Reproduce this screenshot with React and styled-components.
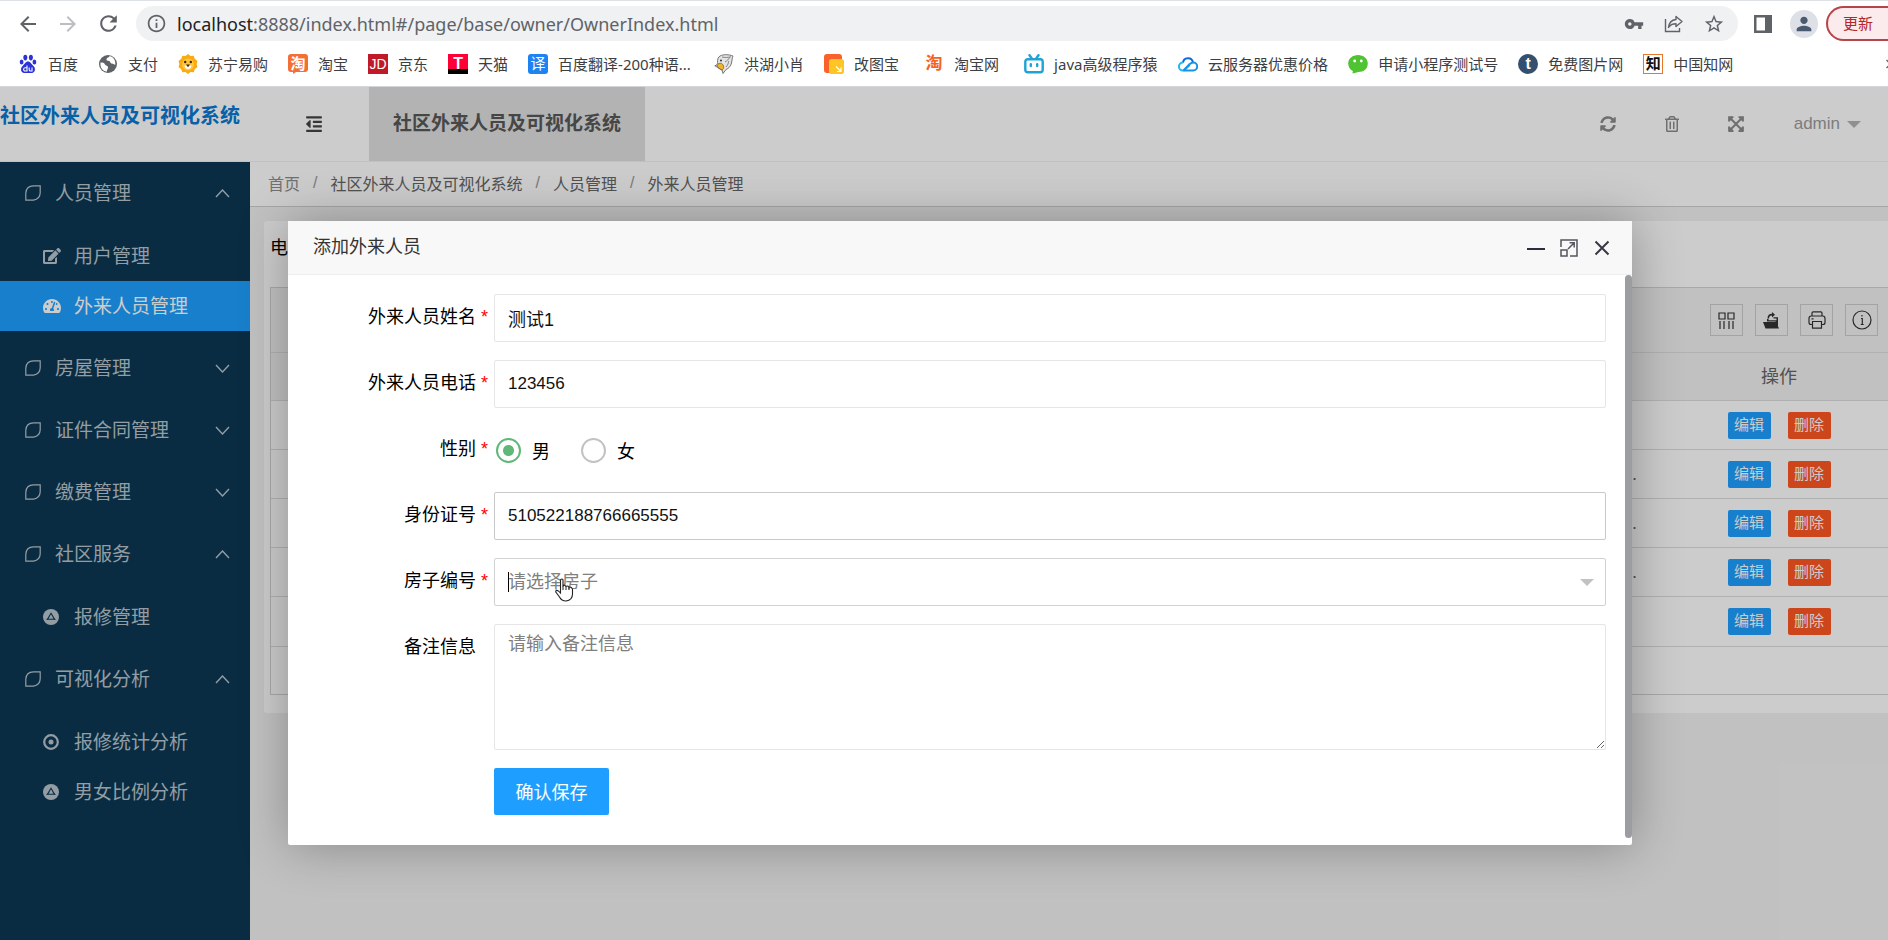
import React, { useState } from "react";
import styled, { createGlobalStyle } from "styled-components";
import { FaOutdent, FaSyncAlt, FaRegTrashAlt, FaExpandArrowsAlt, FaEdit, FaTachometerAlt } from "react-icons/fa";
import { MdArrowBack, MdArrowForward, MdRefresh, MdInfoOutline, MdVpnKey, MdStarBorder, MdPerson } from "react-icons/md";

const GlobalStyle = createGlobalStyle`
  *, *::before, *::after { box-sizing: border-box; }
  body {
    margin: 0;
    overflow: hidden;
    font-family: "Liberation Sans", "Noto Sans CJK SC", sans-serif;
    color: #333;
  }
  button, input, select, textarea { font-family: inherit; }
  svg { display: block; flex: none; }
`;

const Page = styled.div`
  display: flex;
  flex-direction: column;
  height: 100vh;
  overflow: hidden;
`;

/* ---------- browser chrome ---------- */
const Chrome = styled.div`
  border-top: 1px solid #dee1e6;
  border-bottom: 1px solid #d4d5d8;
  background: #fff;
  color: #5f6368;
`;
const AddressRow = styled.div`
  display: flex;
  align-items: center;
  height: 45px;
  padding-left: 16px;
`;
const ChromeButton = styled.button`
  display: flex;
  align-items: center;
  justify-content: center;
  width: 40px;
  height: 32px;
  padding: 0;
  border: 0;
  background: none;
  color: ${(p) => (p.$dim ? "#bcbec2" : "#5f6368")};
`;
const NavButtons = styled.div`
  display: flex;
  margin-left: -8px;
  margin-right: 8px;
`;
const Omnibox = styled.div`
  display: flex;
  flex: 1;
  align-items: center;
  height: 35px;
  margin-right: 5px;
  padding: 0 4px 0 10px;
  border-radius: 18px;
  background: #f0f1f3;
`;
const UrlText = styled.div`
  flex: 1;
  margin-left: 10px;
  font: 18px/32px "Noto Sans", sans-serif;
  white-space: nowrap;
  b { font-weight: 400; color: #202124; }
`;
const Avatar = styled.span`
  display: flex;
  align-items: center;
  justify-content: center;
  width: 28px;
  height: 28px;
  margin: 0 8px 0 7px;
  border-radius: 50%;
  background: #dde0e7;
  color: #4a5a70;
`;
const UpdateButton = styled.button`
  width: 62px;
  height: 35px;
  padding: 0 0 2px 15px;
  border: 2px solid #b5454a;
  border-right: 0;
  border-radius: 18px 0 0 18px;
  background: #fbebec;
  color: #b3262b;
  font-size: 15px;
  text-align: left;
`;
const Bookmarks = styled.nav`
  display: flex;
  align-items: center;
  gap: 20px;
  height: 40px;
  padding: 0 0 4px 18px;
  overflow: hidden;
`;
const Bookmark = styled.a`
  display: flex;
  flex: none;
  align-items: center;
  gap: 10px;
  color: #3c4043;
  font: 15px/20px "Noto Sans", "Noto Sans CJK SC", sans-serif;
  text-decoration: none;
  white-space: nowrap;
`;
const BookmarkLabel = styled.span`
  min-width: ${(p) => p.$min || 30}px;
`;
const More = styled.button`
  margin: 0 -8px 0 auto;
  padding: 0;
  border: 0;
  background: none;
  color: #5f6368;
`;
const Tile = styled.span`
  display: flex;
  align-items: center;
  justify-content: center;
  width: 20px;
  height: 20px;
  border: ${(p) => p.$border || "0"};
  border-radius: ${(p) => p.$round || 0}px;
  background: ${(p) => p.$bg || "none"};
  color: ${(p) => p.$color || "#fff"};
  font: ${(p) => p.$weight || 400} ${(p) => p.$size || 15}px/20px "Liberation Sans", "Noto Sans CJK SC", sans-serif;
`;

/* ---------- admin application ---------- */
const Admin = styled.div`
  position: relative;
  display: flex;
  flex: 1;
  flex-direction: column;
  min-height: 0;
  background: #f2f2f2;
`;
const Header = styled.header`
  display: flex;
  flex: none;
  height: 75px;
  border-bottom: 1px solid #f2f2f2;
  background: #fff;
`;
const Logo = styled.a`
  width: 250px;
  color: #0a78d2;
  font-size: 20px;
  font-weight: 700;
  line-height: 58px;
  text-decoration: none;
  white-space: nowrap;
`;
const IconButton = styled.button`
  display: flex;
  align-items: center;
  justify-content: center;
  width: 64px;
  padding: 0;
  border: 0;
  background: none;
  color: #8b8b8b;
`;
const ToggleButton = styled(IconButton)`
  width: 119px;
  padding-left: 8px;
  color: #444;
`;
const HeaderTab = styled.button`
  padding: 0 24px;
  margin-right: auto;
  border: 0;
  background: #e0e0e0;
  color: #585858;
  font-size: 19px;
  font-weight: 700;
  line-height: 74px;
`;
const User = styled.button`
  display: flex;
  align-items: center;
  gap: 7px;
  margin-left: 26px;
  padding: 0 27px 0 0;
  border: 0;
  background: none;
  color: #9c9c9c;
  font-size: 17px;
  &::after {
    content: "";
    border: 7px solid transparent;
    border-top-color: #b4b4b4;
    border-bottom: 0;
  }
`;
const Body = styled.div`
  display: flex;
  flex: 1;
  min-height: 0;
`;
const Sidebar = styled.nav`
  flex: none;
  width: 250px;
  background: #0c3854;
`;
const MenuTitle = styled.button`
  display: flex;
  align-items: center;
  gap: 14px;
  width: 100%;
  height: 62px;
  padding: 0 20px 0 25px;
  border: 0;
  background: none;
  color: #b9c5cd;
  font-size: 19px;
  text-align: left;
`;
const MenuText = styled.span`
  flex: 1;
  padding-bottom: 3px;
`;
const SubMenu = styled.div`
  padding: 7px 0 6px;
`;
const MenuLink = styled.a`
  display: flex;
  align-items: center;
  gap: 12px;
  height: 50px;
  padding-left: 43px;
  background: ${(p) => (p.$active ? "#1e9fff" : "none")};
  color: ${(p) => (p.$active ? "#fff" : "#b9c5cd")};
  font-size: 19px;
  text-decoration: none;
`;
const IconSlot = styled.span`
  display: flex;
  width: 19px;
`;
const Main = styled.main`
  flex: 1;
  min-width: 0;
`;
const Breadcrumb = styled.nav`
  display: flex;
  align-items: center;
  gap: 13px;
  height: 45px;
  padding: 0 0 2px 18px;
  border-bottom: 1px solid #d0d0d0;
  background: #fff;
  color: #999;
  font-size: 16px;
`;
const Crumb = styled.a`
  color: ${(p) => (p.$home ? "#8c8c8c" : "#666")};
  text-decoration: none;
`;
const Card = styled.section`
  margin: 14px 0 0 14px;
  padding: 0 0 18px 6px;
  border-radius: 3px 0 0 3px;
  background: #fff;
`;
const SearchRow = styled.div`
  height: 66px;
  color: #000;
  font-size: 18px;
  line-height: 54px;
`;
const Grid = styled.div`
  border: 1px solid #d4d4d4;
  border-right: 0;
`;
const GridTools = styled.div`
  display: flex;
  align-items: center;
  justify-content: flex-end;
  gap: 12px;
  height: 64px;
  padding-right: 10px;
  background: #f2f2f2;
`;
const ToolButton = styled.button`
  display: flex;
  align-items: center;
  justify-content: center;
  width: 33px;
  height: 32px;
  padding: 0;
  border: 1px solid #ccc;
  background: none;
  color: #333;
`;
const Table = styled.table`
  width: 100%;
  border-collapse: collapse;
  color: #666;
  font-size: 18px;
  th, td {
    height: 49px;
    padding: 0;
    border-top: 1px solid #dedede;
    font-weight: 400;
  }
  th {
    height: 48px;
    padding-bottom: 4px;
    background: #f2f2f2;
  }
  td:first-child { padding-right: 33px; text-align: right; }
  th:last-child, td:last-child { width: 218px; }
`;
const RowActions = styled.div`
  display: flex;
  align-items: center;
  justify-content: center;
  gap: 17px;
`;
const RowButton = styled.button`
  width: 43px;
  height: 27px;
  padding: 0;
  border: 0;
  border-radius: 2px;
  background: ${(p) => (p.$danger ? "#ff5722" : "#1e9fff")};
  color: #fff;
  font-size: 15px;
  line-height: 26px;
`;
const GridFoot = styled.div`
  height: 48px;
  border-top: 1px solid #dedede;
`;

/* ---------- dialog ---------- */
const Shade = styled.div`
  position: absolute;
  inset: 0;
  padding: 134px 256px 95px 288px;
  background: rgba(0, 0, 0, 0.2);
`;
const Dialog = styled.section`
  display: flex;
  flex-direction: column;
  border-radius: 2px;
  background: #fff;
  box-shadow: 1px 1px 50px rgba(0, 0, 0, 0.3);
`;
const DialogHead = styled.div`
  display: flex;
  align-items: center;
  height: 54px;
  padding: 0 20px 0 25px;
  border-bottom: 1px solid #eee;
  background: #f8f8f8;
`;
const DialogTitle = styled.h2`
  flex: 1;
  margin: 0;
  padding-bottom: 2px;
  color: #333;
  font-size: 18px;
  font-weight: 400;
  line-height: 50px;
`;
const DialogButton = styled.button`
  display: flex;
  align-items: center;
  justify-content: center;
  width: 20px;
  height: 20px;
  margin-left: 13px;
  padding: 0;
  border: 0;
  background: none;
  color: #2e2d3c;
`;
const DialogBody = styled.div`
  display: flex;
`;
const ScrollThumb = styled.div`
  width: 7px;
  margin-bottom: 7px;
  border-radius: 4px;
  background: #9c9da0;
`;
const Form = styled.form`
  display: flex;
  flex: 1;
  flex-direction: column;
  gap: 18px;
  padding: 19px 19px 30px 0;
`;
const Field = styled.div`
  display: flex;
  align-items: flex-start;
`;
const Label = styled.label`
  display: flex;
  flex: none;
  justify-content: flex-end;
  width: 206px;
  color: #000;
  font-size: 18px;
  line-height: 46px;
`;
const Star = styled.span`
  width: 18px;
  padding-left: 5px;
  color: #f00;
`;
const control = `
  flex: 1;
  min-width: 0;
  border-radius: 2px;
  outline: 0;
  background: #fff;
  color: #111;
  font-size: 18px;
  &::placeholder { color: #808080; opacity: 1; }
`;
const TextInput = styled.input`
  ${control}
  height: 48px;
  padding: 0 13px;
  border: 1px solid ${(p) => (p.$strong ? "#c9c9c9" : "#e6e6e6")};
  &[inputmode="numeric"] { font-size: 17px; }
`;
const TextArea = styled.textarea`
  ${control}
  display: block;
  height: 126px;
  padding: 6px 13px;
  border: 1px solid #e6e6e6;
  line-height: 26px;
  resize: vertical;
`;
const SelectBox = styled.div`
  position: relative;
  display: flex;
  flex: 1;
`;
const Select = styled.select`
  ${control}
  height: 48px;
  padding: 0 13px;
  border: 1px solid #d2d2d2;
  color: #808080;
  appearance: none;
`;
const SelectArrow = styled.span`
  position: absolute;
  top: 21px;
  right: 12px;
  border: 7px solid transparent;
  border-top-color: #c2c2c2;
  border-bottom: 0;
  pointer-events: none;
`;
const Caret = styled.span`
  position: absolute;
  top: 14px;
  left: 14px;
  width: 1px;
  height: 20px;
  background: #000;
`;
const Pointer = styled.svg`
  position: absolute;
  top: 20px;
  left: 61px;
`;
const RadioGroup = styled.div`
  display: flex;
  align-items: center;
  gap: 31px;
  height: 48px;
  padding-left: 2px;
`;
const RadioLabel = styled.label`
  display: flex;
  align-items: center;
  gap: 11px;
  color: #000;
  font-size: 18px;
`;
const Radio = styled.input`
  width: 25px;
  height: 25px;
  margin: 0;
  border: 2px solid #c2c2c2;
  border-radius: 50%;
  appearance: none;
  &:checked {
    border-color: #5fb878;
    background: radial-gradient(circle, #5fb878 5px, transparent 6px);
  }
`;
const SaveButton = styled.button`
  width: 115px;
  height: 47px;
  margin-left: 206px;
  padding: 0 0 2px;
  border: 0;
  border-radius: 2px;
  background: #1e9fff;
  color: #fff;
  font-size: 18px;
`;

/* ---------- icons ---------- */
const Paw = () => (
  <svg width="20" height="20" viewBox="0 0 20 20" fill="#2b32d8">
    <ellipse cx="7.3" cy="3.6" rx="2" ry="2.8" /><ellipse cx="12.9" cy="3.6" rx="2" ry="2.8" />
    <ellipse cx="3.6" cy="8" rx="1.9" ry="2.5" /><ellipse cx="16.4" cy="8" rx="1.9" ry="2.5" />
    <path d="M10 7.5c-2.6 0-3.2 2.6-5.2 4.2-2.8 2.3-2.2 7 1.4 7.2h7.6c3.6-.2 4.2-4.9 1.4-7.2-2-1.6-2.6-4.2-5.2-4.2z" />
    <path d="M9 11.500v5.500H7.200a1.600 1.600 0 0 1 0-3.200H9M11.200 13.500v2.200q0 1.300 1.300 1.300h1.500v-3.500" fill="none" stroke="#fff" strokeWidth="1.100" />
  </svg>
);
const Globe = () => (
  <svg width="20" height="20" viewBox="0 0 20 20">
    <circle cx="10" cy="10" r="9" fill="#5f6368" />
    <path d="M2.500 8.500c2 .2 3.500 0 4.500 2 .8 1.600 3 .8 3 3 0 1.500-1 2-1.300 4.300C4.500 17 2 13.500 2.500 8.500zM11.500 2c-.2 1.800-2.500 1.200-3 3.200-.4 1.500 1 1.500 2.500 1.700 1.800.300 1 2.600 3 2.700 1.200 0 1.700 1 3.300 1.100C17.700 6 15.500 3 11.500 2z" fill="#fff" />
  </svg>
);
const Lion = () => (
  <svg width="20" height="20" viewBox="0 0 20 20">
    <path d="M10 0l2.500 2 3.200-.3 1 3L19.500 7 18.600 10l.9 3-2.800 2.200-1 3-3.200-.2L10 20l-2.500-2-3.200.2-1-3L.500 13l.9-3-.9-3 2.800-2.300 1-3 3.200.3z" fill="#f9ab10" />
    <circle cx="10" cy="10.500" r="6" fill="#ffc63c" />
    <circle cx="7.200" cy="8" r="1.200" fill="#3a2410" /><circle cx="12.800" cy="8" r="1.200" fill="#3a2410" />
    <path d="M6.500 11.500h7q-.6 3.500-3.500 3.500t-3.500-3.500z" fill="#fff" />
    <path d="M8 10.500h4L10 13.200z" fill="#3a2410" />
  </svg>
);
const Bird = () => (
  <svg width="20" height="20" viewBox="0 0 20 20">
    <path d="M6 2c4-2 9-1.500 13 0-1 2-.8 4-1.500 7-.8 3.500-3 5.500-5.500 6.500L9 19.500 8 16C5 15 2 12 .8 11.800c2-.6 2.600-1.300 2.700-3.300C3.500 5.500 4 3 6 2z" fill="#e4e4e4" stroke="#666" strokeWidth=".9" />
    <path d="M4.500 9.500c2-.8 4.500 0 5 2.500s0 3-1.500 4c-2-1-4-2.500-5-4z" fill="#efb32c" stroke="#5a4a20" strokeWidth=".6" />
    <path d="M8 3c3 .8 6 .5 9-.2M11 8c2-1 3.500-2.500 4.500-4.500M12 13c1.500-1.500 2.500-4 2.800-6" stroke="#777" fill="none" strokeWidth=".9" />
    <circle cx="7" cy="6.500" r="1" fill="#333" />
  </svg>
);
const Photos = () => (
  <svg width="20" height="20" viewBox="0 0 20 20">
    <rect width="18" height="19" rx="3" fill="#f9622b" />
    <rect x="5" y="5" width="15" height="15" rx="2.500" fill="#ffc525" />
    <path d="M12 12.500l5 5m0-4v4h-4" stroke="#fff" fill="none" strokeWidth="1.100" />
  </svg>
);
const TaobaoBubble = () => (
  <svg width="20" height="20" viewBox="0 0 20 20">
    <path d="M3 0h14q3 0 3 3v12q0 3-3 3H8l-3 2v-2H3q-3 0-3-3V3q0-3 3-3z" fill="#f36f36" />
    <text x="10" y="15" textAnchor="middle" fontSize="15" fontWeight="700" fill="#fff" fontFamily="Noto Sans CJK SC">淘</text>
  </svg>
);
const Bili = () => (
  <svg width="20" height="20" viewBox="0 0 20 20" fill="none" stroke="#20a3d4" strokeWidth="2.400" strokeLinecap="round">
    <rect x="1.300" y="5.200" width="17.400" height="13" rx="2.500" /><path d="M5.500 1.200L7.500 4M14.500 1.200L12.500 4M6.800 10.300v1.800M13.200 10.300v1.800" />
  </svg>
);
const CloudLogo = () => (
  <svg width="20" height="20" viewBox="0 0 20 20" fill="none" strokeWidth="2">
    <path d="M5 8.800a5 5 0 0 1 9.900-.6" stroke="#1268dd" /><path d="M5 8.500a4 4 0 0 0-.2 8h1l6-5.500" stroke="#26b6f0" />
    <path d="M5.500 16.500h9.700a4 4 0 0 0 0-8c-1.700 0-2.800 1-4 2L5.500 16.500" stroke="#1695e5" />
  </svg>
);
const WeChat = () => (
  <svg width="20" height="20" viewBox="0 0 20 20">
    <path d="M10 1c5.300 0 9.800 3.500 9.800 8.500S16 18 10.500 18L4.500 19.500 4.800 17C2 15.500.2 12.800.2 9.500.2 4.500 4.700 1 10 1z" fill="#50c332" />
    <circle cx="6.700" cy="7" r="1.400" fill="#fff" /><circle cx="13.300" cy="7" r="1.400" fill="#fff" />
  </svg>
);
const MoreArrows = () => (
  <svg width="10" height="10" viewBox="0 0 10 10" fill="none" stroke="currentColor" strokeWidth="1.500">
    <path d="M.5 1l4 4-4 4M5 1l4 4-4 4" />
  </svg>
);
const Share = () => (
  <svg width="20" height="20" viewBox="0 0 20 20" fill="none" stroke="#5f6368" strokeWidth="1.400">
    <path d="M1.500 5v12.500h14V14" /><path d="M12 2.500l6 5-6 5V9.700c-3.500 0-5.800 1-7.500 3.800.5-4.500 3-7.500 7.500-8z" strokeLinejoin="round" />
  </svg>
);
const SidePanel = () => (
  <svg width="20" height="20" viewBox="0 0 20 20">
    <path d="M1 1h18v18H1zM3.500 3.500v13H12v-13z" fill="#5f6368" fillRule="evenodd" />
  </svg>
);
const Leaf = () => (
  <svg width="16" height="16" viewBox="0 0 16 16" fill="none" stroke="currentColor" strokeWidth="1.200">
    <path d="M.8 15.200V8.200Q1.200.800 8.500.800H15.200V7.800Q15 14.200 8.500 15.200z" />
  </svg>
);
const Chevron = ({ up }) => (
  <svg width="15" height="9" viewBox="0 0 15 9" fill="none" stroke="currentColor" strokeWidth="1.400">
    <path d={up ? "M1 8l6.500-7L14 8" : "M1 1l6.500 7L14 1"} />
  </svg>
);
const Disc = () => (
  <svg width="16" height="16" viewBox="0 0 16 16">
    <circle cx="8" cy="8" r="8" fill="currentColor" /><path d="M8 4.300l3.500 6h-7z" fill="none" stroke="#0c3854" strokeWidth="1.100" /><path d="M3.500 11l2.300-2.500M12.500 11l-2.300-2.500" stroke="#0c3854" strokeWidth=".8" />
  </svg>
);
const Target = () => (
  <svg width="16" height="16" viewBox="0 0 16 16">
    <circle cx="8" cy="8" r="6.800" fill="none" stroke="currentColor" strokeWidth="2.200" /><circle cx="8" cy="8" r="2.500" fill="currentColor" />
  </svg>
);
const Columns = () => (
  <svg width="17" height="17" viewBox="0 0 17 17" fill="none" stroke="currentColor" strokeWidth="1.200">
    <path d="M1 1h6v6H1zM10 1h6v6h-6zM2 9v8M6 9v8M11 9v8M15 9v8" />
  </svg>
);
const Export = () => (
  <svg width="17" height="17" viewBox="0 0 17 17" fill="currentColor">
    <path d="M0 10h13l3 6.500H2.500zM15 6.500v8l-2.500-5H4V7h1.500v1.200H13.500V6.500h-3V5.300H15z" /><path d="M9 0l3 2.700-3 2.700V3.600C7 3.600 6 4.600 6 6.500H4.500C4.500 3.500 6 1.900 9 1.800z" />
  </svg>
);
const Printer = () => (
  <svg width="18" height="18" viewBox="0 0 18 18" fill="none" stroke="currentColor" strokeWidth="1.200">
    <path d="M4 5V2q0-1.200 1.200-1.200h7.600Q14 .8 14 2v3M4.300 13.500H3Q1 13.500 1 11.500v-4Q1 5 3.200 5h11.600Q17 5 17 7.500v4q0 2-2 2h-1.300M4.500 10.500h9v6.700h-9zM3.500 7.800h2" />
  </svg>
);
const Info = () => (
  <svg width="20" height="20" viewBox="0 0 20 20" fill="none" stroke="currentColor" strokeWidth="1.200">
    <circle cx="10" cy="10" r="9" /><path d="M9 8.500h1.300v6M10 5v1.500M8.700 14.500h3" />
  </svg>
);
const Minimize = () => (
  <svg width="18" height="18" viewBox="0 0 18 18"><path d="M0 10h18" stroke="currentColor" strokeWidth="2" /></svg>
);
const Maximize = () => (
  <svg width="18" height="18" viewBox="0 0 18 18" fill="none" stroke="#55545f" strokeWidth="1.500">
    <path d="M1 8V1h16v16h-7M1 11h6v6H1zM8 10l6-6M9.500 3.800H14.200V8.500" />
  </svg>
);
const Close = () => (
  <svg width="16" height="16" viewBox="0 0 16 16"><path d="M1.500 1.500l13 13M14.500 1.500l-13 13" stroke="#3a3945" strokeWidth="2" /></svg>
);
const Hand = () => (
  <Pointer width="19" height="24" viewBox="0 0 19 24">
    <path d="M5.500 14V2.500q0-1.500 1.300-1.500T8 2.500v6q.3-1.500 1.500-1.300T11 9q.3-1.300 1.500-1T14 9.800q.4-1 1.500-.7T17.500 11v5q0 6-6.500 7-4.500 0-6.500-4L.800 14q-.3-1.500 1-1.600T5.500 15z" fill="#fff" stroke="#222" strokeWidth="1.100" /><path d="M8 8v4M11 9v3M14 10v2" stroke="#222" />
  </Pointer>
);

/* ---------- data ---------- */
const bookmarks = [
  ["百度", <Paw />],
  ["支付", <Globe />],
  ["苏宁易购", <Lion />],
  ["淘宝", <TaobaoBubble />],
  ["京东", <Tile $bg="#c01a28" $size={14}>JD</Tile>],
  ["天猫", <Tile $bg="linear-gradient(#ff0036 75%, #000 75%)" $weight={700} $size={16}>T</Tile>],
  ["百度翻译-200种语...", <Tile $bg="#1d82f2" $round={3}>译</Tile>, 136],
  ["洪湖小肖", <Bird />],
  ["改图宝", <Photos />, 50],
  ["淘宝网", <Tile $color="#f4631e" $weight={700} $size={17}>淘</Tile>, 50],
  ["java高级程序猿", <Bili />, 104],
  ["云服务器优惠价格", <CloudLogo />],
  ["申请小程序测试号", <WeChat />],
  ["免费图片网", <Tile $bg="#35506e" $round={10} $weight={700} $size={16}>t</Tile>],
  ["中国知网", <Tile $border="1px solid #e8772e" $color="#111" $weight={700}>知</Tile>],
];

const menu = [
  { title: "人员管理", open: true, items: [["用户管理", <FaEdit size={18} />], ["外来人员管理", <FaTachometerAlt size={18} />, true]] },
  { title: "房屋管理" },
  { title: "证件合同管理" },
  { title: "缴费管理" },
  { title: "社区服务", open: true, items: [["报修管理", <Disc />]] },
  { title: "可视化分析", open: true, items: [["报修统计分析", <Target />], ["男女比例分析", <Disc />]] },
];

const addresses = ["", "...", "...", "...", ""];

const Required = () => <Star aria-hidden="true">*</Star>;

function Browser() {
  return (
    <Chrome>
      <AddressRow>
        <NavButtons>
          <ChromeButton aria-label="后退"><MdArrowBack size={24} /></ChromeButton>
          <ChromeButton aria-label="前进" $dim><MdArrowForward size={24} /></ChromeButton>
          <ChromeButton aria-label="刷新"><MdRefresh size={25} /></ChromeButton>
        </NavButtons>
        <Omnibox>
          <MdInfoOutline size={21} />
          <UrlText><b>localhost</b>:8888/index.html#/page/base/owner/OwnerIndex.html</UrlText>
          <ChromeButton aria-label="密码"><MdVpnKey size={20} /></ChromeButton>
          <ChromeButton aria-label="分享"><Share /></ChromeButton>
          <ChromeButton aria-label="收藏"><MdStarBorder size={22} /></ChromeButton>
        </Omnibox>
        <ChromeButton aria-label="侧边栏"><SidePanel /></ChromeButton>
        <Avatar><MdPerson size={22} /></Avatar>
        <UpdateButton>更新</UpdateButton>
      </AddressRow>
      <Bookmarks>
        {bookmarks.map(([name, icon, min]) => (
          <Bookmark href="#" key={name}>
            {icon}
            <BookmarkLabel $min={min}>{name}</BookmarkLabel>
          </Bookmark>
        ))}
        <More aria-label="更多书签"><MoreArrows /></More>
      </Bookmarks>
    </Chrome>
  );
}

function SideMenu() {
  return (
    <Sidebar>
      {menu.map((group) => (
        <React.Fragment key={group.title}>
          <MenuTitle>
            <Leaf />
            <MenuText>{group.title}</MenuText>
            <Chevron up={group.open} />
          </MenuTitle>
          {group.items && (
            <SubMenu>
              {group.items.map(([name, icon, active]) => (
                <MenuLink href="#" key={name} $active={active}>
                  <IconSlot>{icon}</IconSlot>
                  <MenuText>{name}</MenuText>
                </MenuLink>
              ))}
            </SubMenu>
          )}
        </React.Fragment>
      ))}
    </Sidebar>
  );
}

function OwnerList() {
  return (
    <Main>
      <Breadcrumb>
        <Crumb href="#" $home>首页</Crumb>/
        <Crumb href="#">社区外来人员及可视化系统</Crumb>/
        <Crumb href="#">人员管理</Crumb>/
        <Crumb href="#">外来人员管理</Crumb>
      </Breadcrumb>
      <Card>
        <SearchRow>电</SearchRow>
        <Grid>
          <GridTools>
            <ToolButton aria-label="筛选列"><Columns /></ToolButton>
            <ToolButton aria-label="导出"><Export /></ToolButton>
            <ToolButton aria-label="打印"><Printer /></ToolButton>
            <ToolButton aria-label="提示"><Info /></ToolButton>
          </GridTools>
          <Table>
            <thead>
              <tr><th /><th>操作</th></tr>
            </thead>
            <tbody>
              {addresses.map((text, i) => (
                <tr key={i}>
                  <td>{text}</td>
                  <td>
                    <RowActions>
                      <RowButton>编辑</RowButton>
                      <RowButton $danger>删除</RowButton>
                    </RowActions>
                  </td>
                </tr>
              ))}
            </tbody>
          </Table>
          <GridFoot />
        </Grid>
      </Card>
    </Main>
  );
}

function AddVisitorDialog() {
  const [sex, setSex] = useState("男");
  return (
    <Shade>
      <Dialog role="dialog" aria-labelledby="dialog-title">
        <DialogHead>
          <DialogTitle id="dialog-title">添加外来人员</DialogTitle>
          <DialogButton aria-label="最小化"><Minimize /></DialogButton>
          <DialogButton aria-label="最大化"><Maximize /></DialogButton>
          <DialogButton aria-label="关闭"><Close /></DialogButton>
        </DialogHead>
        <DialogBody>
          <Form onSubmit={(e) => e.preventDefault()}>
            <Field>
              <Label htmlFor="name">外来人员姓名<Required /></Label>
              <TextInput id="name" defaultValue="测试1" />
            </Field>
            <Field>
              <Label htmlFor="phone">外来人员电话<Required /></Label>
              <TextInput id="phone" inputMode="numeric" defaultValue="123456" />
            </Field>
            <Field>
              <Label as="div" id="sex">性别<Required /></Label>
              <RadioGroup role="radiogroup" aria-labelledby="sex">
                {["男", "女"].map((v) => (
                  <RadioLabel key={v}>
                    <Radio type="radio" name="sex" checked={sex === v} onChange={() => setSex(v)} />
                    {v}
                  </RadioLabel>
                ))}
              </RadioGroup>
            </Field>
            <Field>
              <Label htmlFor="card">身份证号<Required /></Label>
              <TextInput id="card" inputMode="numeric" defaultValue="510522188766665555" $strong />
            </Field>
            <Field>
              <Label htmlFor="house">房子编号<Required /></Label>
              <SelectBox>
                <Select id="house"><option>请选择房子</option></Select>
                <SelectArrow />
                <Caret />
                <Hand />
              </SelectBox>
            </Field>
            <Field>
              <Label htmlFor="remark">备注信息<Star /></Label>
              <TextArea id="remark" placeholder="请输入备注信息" />
            </Field>
            <SaveButton type="submit">确认保存</SaveButton>
          </Form>
          <ScrollThumb />
        </DialogBody>
      </Dialog>
    </Shade>
  );
}

export default function App() {
  return (
    <Page>
      <GlobalStyle />
      <Browser />
      <Admin>
        <Header>
          <Logo href="#">社区外来人员及可视化系统</Logo>
          <ToggleButton aria-label="侧边伸缩"><FaOutdent size={18} /></ToggleButton>
          <HeaderTab>社区外来人员及可视化系统</HeaderTab>
          <IconButton aria-label="刷新"><FaSyncAlt size={16} /></IconButton>
          <IconButton aria-label="清理"><FaRegTrashAlt size={16} /></IconButton>
          <IconButton aria-label="全屏"><FaExpandArrowsAlt size={18} /></IconButton>
          <User>admin</User>
        </Header>
        <Body>
          <SideMenu />
          <OwnerList />
        </Body>
        <AddVisitorDialog />
      </Admin>
    </Page>
  );
}
